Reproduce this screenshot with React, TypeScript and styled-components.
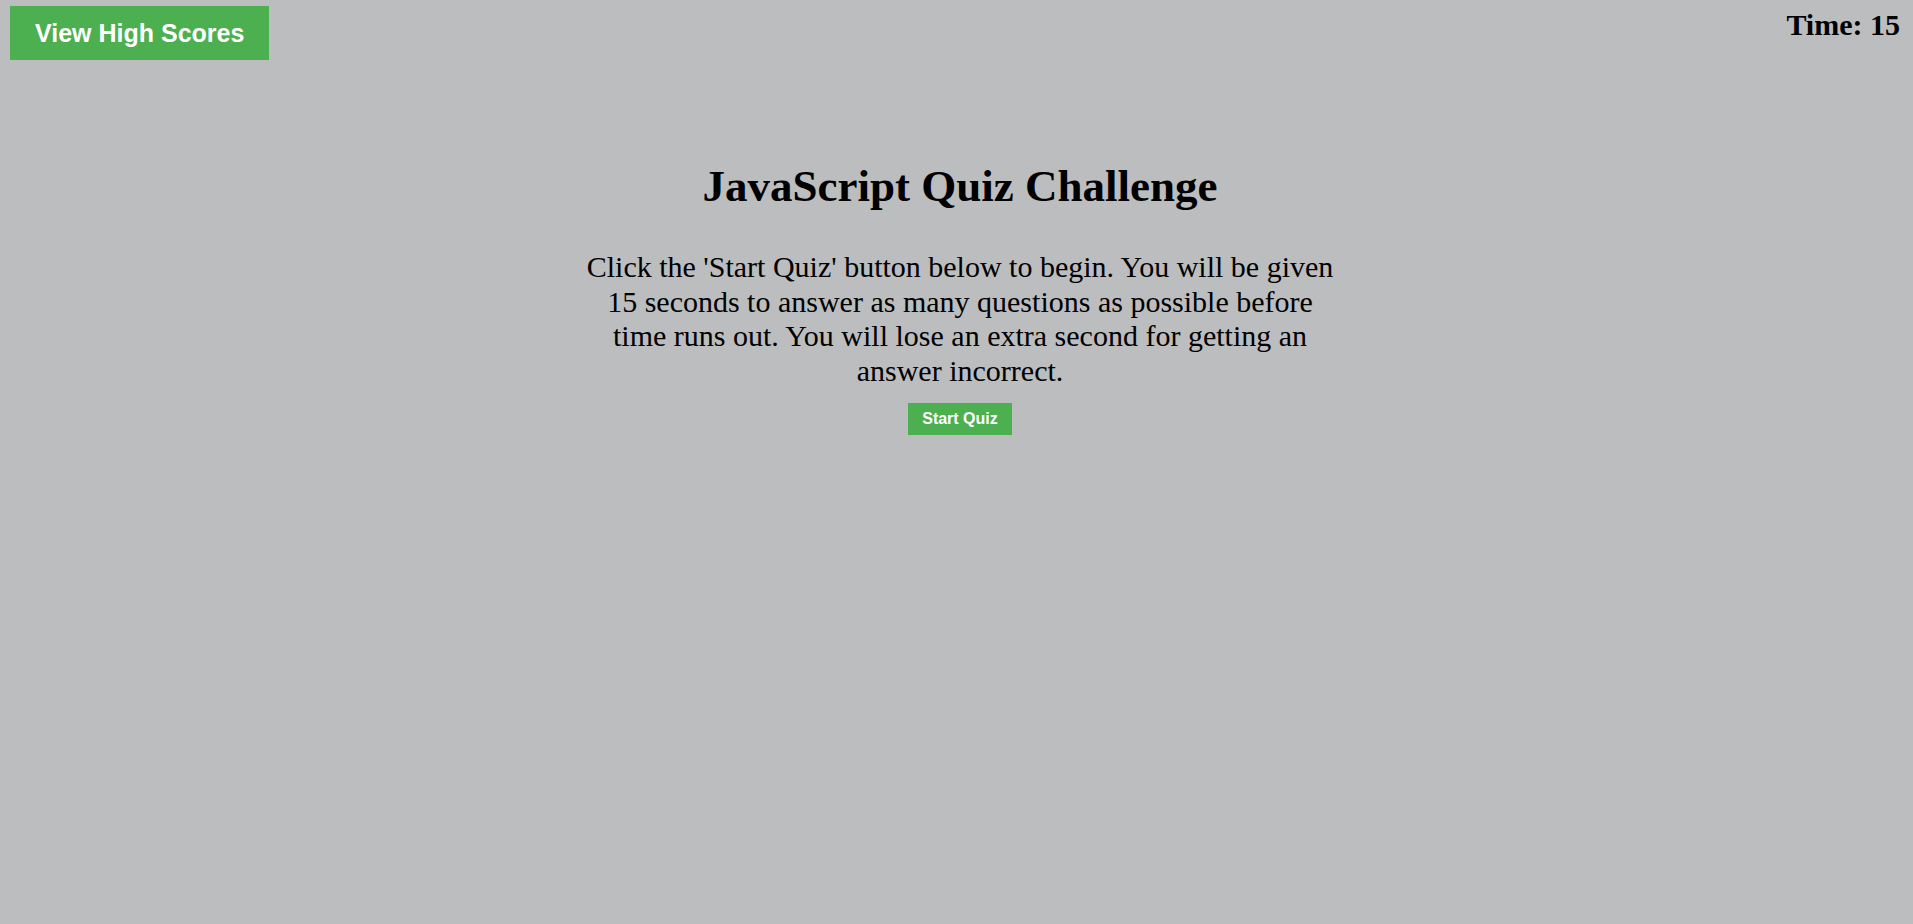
import React from "react";
import styled, { createGlobalStyle } from "styled-components";

const GlobalStyle = createGlobalStyle`
  html, body {
    margin: 0;
    padding: 0;
    background: #bcbdbf;
  }
  body {
    font-family: "Liberation Serif", "Times New Roman", serif;
    color: #000;
  }
`;

const Page = styled.div`
  min-height: 100vh;
  background: #bcbdbf;
`;

const Header = styled.header`
  display: flex;
  justify-content: space-between;
  align-items: flex-start;
  padding: 5px 13px 0 10px;
`;

const GreenButton = styled.button<{ $size: "large" | "small" }>`
  display: block;
  border: none;
  border-radius: 0;
  background: #4caf50;
  color: #fff;
  font-family: "Liberation Sans", Arial, sans-serif;
  font-weight: bold;
  cursor: pointer;
  margin: 0;
  font-size: ${(p) => (p.$size === "large" ? "25px" : "16px")};
  line-height: ${(p) => (p.$size === "large" ? "28px" : "18px")};
  padding: ${(p) => (p.$size === "large" ? "13px 25px" : "7px 14px")};
  margin-top: ${(p) => (p.$size === "large" ? "1px" : "0")};
`;

const Timer = styled.div`
  font-family: "Liberation Serif", "Times New Roman", serif;
  font-weight: bold;
  font-size: 30px;
  line-height: 34px;
  margin-top: 3px;
`;

const Main = styled.main`
  display: flex;
  flex-direction: column;
  align-items: center;
  margin-top: 100px;
  padding-left: 7px;
`;

const Title = styled.h1`
  margin: 0;
  font-size: 45px;
  line-height: 52px;
  font-weight: bold;
`;

const Intro = styled.p`
  margin: 38px 0 15px;
  width: 755px;
  text-align: center;
  font-size: 30px;
  line-height: 34.5px;
`;

export default function App() {
  return (
    <Page>
      <GlobalStyle />
      <Header>
        <GreenButton $size="large">View High Scores</GreenButton>
        <Timer>Time: 15</Timer>
      </Header>
      <Main>
        <Title>JavaScript Quiz Challenge</Title>
        <Intro>
          Click the 'Start Quiz' button below to begin. You will be given 15
          seconds to answer as many questions as possible before time runs out.
          You will lose an extra second for getting an answer incorrect.
        </Intro>
        <GreenButton $size="small">Start Quiz</GreenButton>
      </Main>
    </Page>
  );
}
